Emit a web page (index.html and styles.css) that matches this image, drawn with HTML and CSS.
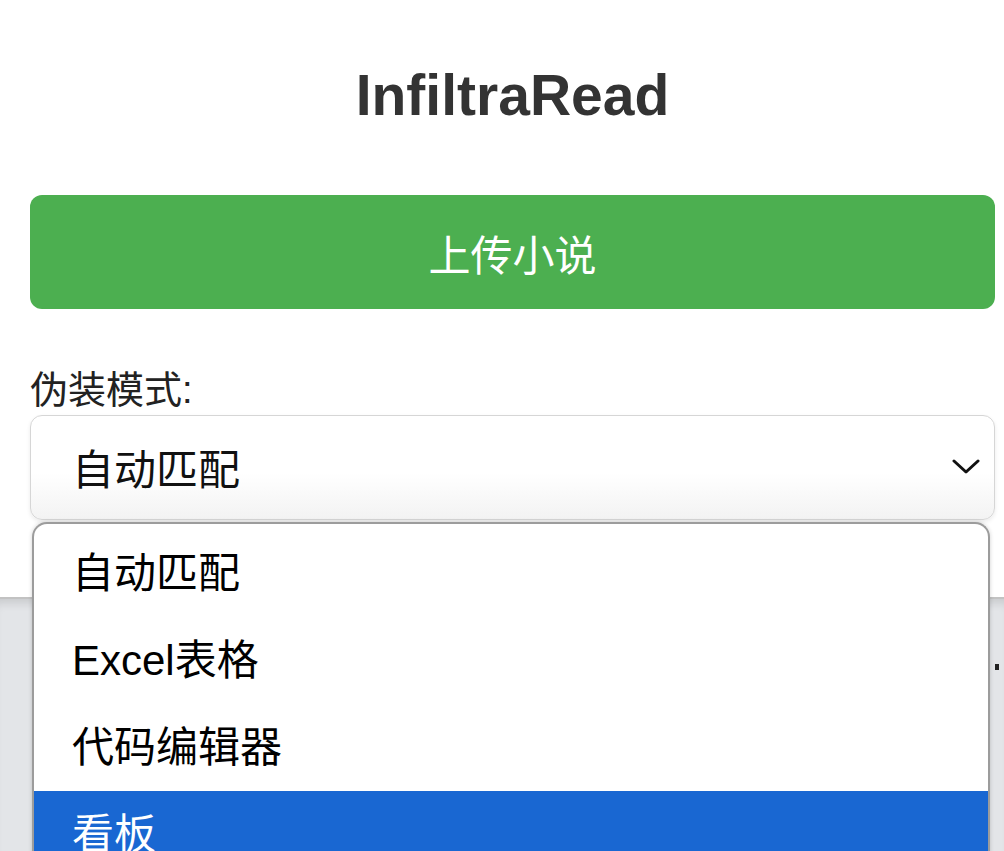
FILE: index.html
```html
<!DOCTYPE html>
<html lang="zh-CN">
<head>
<meta charset="utf-8">
<title>InfiltraRead</title>
<link rel="stylesheet" href="styles.css">
</head>
<body>
<div class="app">
  <h1 class="title">InfiltraRead</h1>
  <button class="upload">上传小说</button>
  <label class="label">伪装模式:</label>
  <div class="select">
    <span class="select-value">自动匹配</span>
    <svg class="chevron" width="28" height="16" viewBox="0 0 28 16"><path d="M2 2 L14 13 L26 2" fill="none" stroke="#111" stroke-width="3" stroke-linecap="round" stroke-linejoin="round"/></svg>
  </div>
</div>
<div class="lower"><span class="dot"></span></div>
<div class="dropdown">
  <div class="option">自动匹配</div>
  <div class="option">Excel表格</div>
  <div class="option">代码编辑器</div>
  <div class="option selected">看板</div>
</div>
</body>
</html>
```
FILE: styles.css
```css
html, body {
  margin: 0;
  height: 851px;
  overflow: hidden;
  background: #fff;
}
body {
  position: relative;
  font-family: "Liberation Sans", "Noto Sans CJK SC", sans-serif;
}
.app {
  padding: 61px 9px 0 30px;
  display: flex;
  flex-direction: column;
}
.title {
  margin: 0;
  font-size: 57px;
  line-height: 68px;
  font-weight: bold;
  color: #333;
  text-align: center;
}
.upload {
  margin-top: 66px;
  height: 114px;
  border: none;
  border-radius: 12px;
  background: #4caf50;
  color: #fff;
  font-family: "Liberation Sans", "Noto Sans CJK SC", sans-serif;
  font-size: 42px;
  padding: 0;
}
.label {
  margin-top: 59px;
  font-size: 38px;
  line-height: 44px;
  color: #222;
}
.select {
  margin-top: 3px;
  height: 105px;
  box-sizing: border-box;
  border: 1px solid #d6d6d6;
  border-radius: 12px;
  background: linear-gradient(#fff 55%, #f3f3f3);
  box-shadow: 0 2px 4px rgba(0,0,0,0.08);
  display: flex;
  align-items: center;
  justify-content: space-between;
  padding: 0 14px 2px 41px;
}
.select-value {
  font-size: 42px;
  color: #111;
}
.lower {
  margin-top: 77px;
  height: 260px;
  background: #e3e5e8;
  border-top: 2px solid #c2c2c2;
  box-shadow: inset 0 10px 10px -6px rgba(0,0,0,0.12);
  text-align: right;
  padding: 57px 5px 0 0;
  box-sizing: border-box;
}
.dot {
  display: inline-block;
  width: 4px;
  height: 6px;
  background: #222;
}
.dropdown {
  position: absolute;
  left: 32px;
  top: 522px;
  width: 958px;
  box-sizing: border-box;
  height: 400px;
  border: 2px solid #9c9c9c;
  border-bottom: none;
  border-radius: 15px 15px 0 0;
  background: #fff;
  padding-top: 6px;
  box-shadow: 0 0 4px rgba(0,0,0,0.18);
}
.option {
  height: 87px;
  line-height: 87px;
  padding-left: 38px;
  font-size: 42px;
  color: #000;
}
.option.selected {
  background: #1967d2;
  color: #fff;
}
```
